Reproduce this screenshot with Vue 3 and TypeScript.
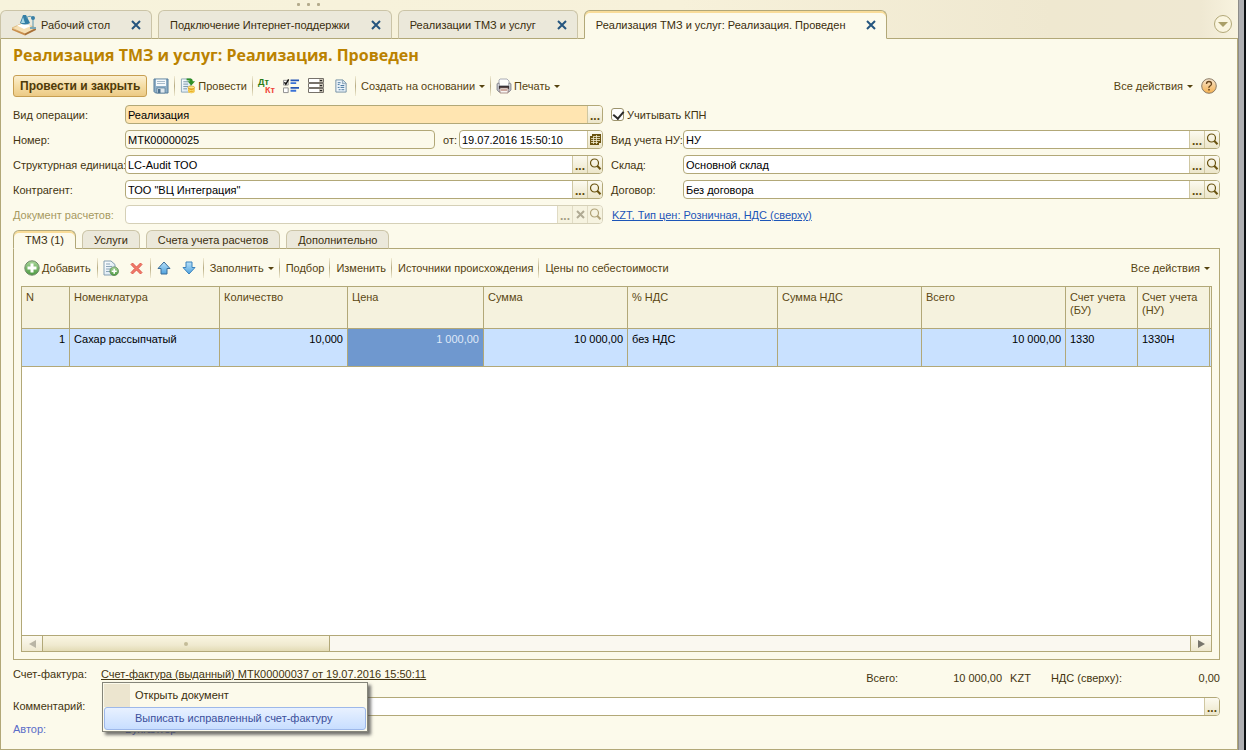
<script setup lang="ts">
import { ref } from 'vue'

interface WindowTab { title: string; icon?: boolean; active?: boolean }
interface Column { title: string; width?: number; numeric?: boolean; value: string; current?: boolean }

const windowTabs: WindowTab[] = [
  { title: 'Рабочий стол', icon: true },
  { title: 'Подключение Интернет-поддержки' },
  { title: 'Реализации ТМЗ и услуг' },
  { title: 'Реализация ТМЗ и услуг: Реализация. Проведен', active: true },
]

const sectionTabs = ['ТМЗ (1)', 'Услуги', 'Счета учета расчетов', 'Дополнительно']
const activeSection = ref(0)

const columns: Column[] = [
  { title: 'N', width: 48, numeric: true, value: '1' },
  { title: 'Номенклатура', width: 150, value: 'Сахар рассыпчатый' },
  { title: 'Количество', width: 128, numeric: true, value: '10,000' },
  { title: 'Цена', width: 136, numeric: true, value: '1 000,00', current: true },
  { title: 'Сумма', width: 144, numeric: true, value: '10 000,00' },
  { title: '% НДС', width: 150, value: 'без НДС' },
  { title: 'Сумма НДС', width: 144, numeric: true, value: '' },
  { title: 'Всего', width: 144, numeric: true, value: '10 000,00' },
  { title: 'Счет учета (БУ)', width: 72, value: '1330' },
  { title: 'Счет учета (НУ)', width: 72, value: '1330Н' },
  { title: '', value: '' },
]

const operation = ref('Реализация')
const docNumber = ref('МТК00000025')
const docDate = ref('19.07.2016 15:50:10')
const unit = ref('LC-Audit ТОО')
const partner = ref('ТОО "ВЦ Интеграция"')
const settlement = ref('')
const taxKind = ref('НУ')
const warehouse = ref('Основной склад')
const contract = ref('Без договора')
const comment = ref('')
const useKpn = ref(true)
</script>

<template>
  <div class="shell">
    <svg class="defs" aria-hidden="true">
      <defs>
        <linearGradient id="gGreen" x1="0" y1="0" x2="0" y2="1"><stop offset="0" stop-color="#a9d69a" /><stop offset="1" stop-color="#4c9a40" /></linearGradient>
        <linearGradient id="gBlue" x1="0" y1="0" x2="0" y2="1"><stop offset="0" stop-color="#b9e2fa" /><stop offset="1" stop-color="#4fa2de" /></linearGradient>
        <linearGradient id="gHelp" x1="0" y1="0" x2="0" y2="1"><stop offset="0" stop-color="#f7e6d0" /><stop offset="1" stop-color="#f5b04e" /></linearGradient>
        <linearGradient id="gPaper" x1="0" y1="0" x2="1" y2="1"><stop offset="0" stop-color="#ffffff" /><stop offset="1" stop-color="#cfe2ef" /></linearGradient>
      </defs>
      <symbol id="close" viewBox="0 0 10 10"><path d="M1 1 9 9M9 1 1 9" stroke="#25557f" stroke-width="2" fill="none" /></symbol>
      <symbol id="search" viewBox="0 0 13 13"><circle cx="5.5" cy="5" r="4" fill="none" stroke="#6a5310" stroke-width="1.2" /><path d="M8.200 7.800 11.500 11.300" stroke="#6a5310" stroke-width="2" /></symbol>
      <symbol id="clear" viewBox="0 0 9 9"><path d="M1 1 8 8M8 1 1 8" stroke="#6a6348" stroke-width="2" fill="none" /></symbol>
      <symbol id="calendar" viewBox="0 0 12 12"><path d="M3 0h9v9h-2v2H1V2h2z" fill="#6a5310" /><path d="M4 2.500h7M2 4.500h9M2 6.500h9M2 8.500h7M4.500 3v7M7.500 1v9" stroke="#f3ecd0" stroke-width=".8" /></symbol>
      <symbol id="desk" viewBox="0 0 26 22">
        <path d="M1 14 12 9l13 5-11 6z" fill="#f6dfb2" stroke="#dfbd85" /><path d="M1 14.500v1.500l13 5.500v-2z" fill="#c98e4c" /><path d="M14 19.500v2L25 16v-2z" fill="#a87038" />
        <path d="M6 11.500 14 9l6 3-7 3z" fill="#fff" /><path d="M12 1h3l4 8q-5 3-10 0z" fill="#357fa6" /><path d="M12 3 10 9h4z" fill="#a9d7e5" /><path d="M15 4q5-4 7 1v8" fill="none" stroke="#5796b0" /><circle cx="22" cy="4" r="2" fill="#397fa6" /><path d="M19 13h6v2h-6z" fill="#7ba7b6" />
      </symbol>
      <symbol id="save" viewBox="0 0 16 16"><path d="M1 1h14v14H2.500L1 13.500z" fill="#8fafc7" stroke="#567c9a" /><path d="M3 1.500h10V8H3z" fill="#f6fafc" /><path d="M4 3.500h8M4 5.500h8" stroke="#a9bccb" /><path d="M4 10h8v5H4z" fill="#dfe8ee" stroke="#567c9a" stroke-width=".7" /><path d="M5 11h2.500v4H5z" fill="#4c718f" /></symbol>
      <symbol id="post" viewBox="0 0 16 17">
        <path d="M1 1h10v14H1z" fill="url(#gPaper)" stroke="#8ca6b7" /><path d="M3 4h5M3 6.500h5M3 9h5M3 11.500h4" stroke="#7893a7" />
        <path d="M6.500.5h4q2.500 0 2.500 3h2.500L11.500 8 7.500 3.500H10q0-1-3.500-1z" fill="#2f8f27" />
        <path d="M8 10v5q3.500 2.500 7 0v-5z" fill="#e7a91f" /><ellipse cx="11.5" cy="10" rx="3.500" ry="1.500" fill="#ffe682" stroke="#ca8c18" stroke-width=".6" /><path d="M8 12.500q3.500 2 7 0M8 14.500q3.500 2 7 0" fill="none" stroke="#fbe07a" />
      </symbol>
      <symbol id="checks" viewBox="0 0 17 16"><path d="M.5 2h5v5h-5zM.5 10h5v5h-5z" fill="#fff" stroke="#8b8b8b" /><path d="M1.500 4 3 6l3-5" fill="none" stroke="#111" stroke-width="1.500" /><path d="M8 2h9M8 10h9" stroke="#2455b5" stroke-width="2" /><path d="M8 5h6M8 13h6" stroke="#3a72d7" stroke-width="2" /></symbol>
      <symbol id="combos" viewBox="0 0 16 16"><path d="M.5.5h15v4H.5zM.5 5.500h15v4H.5zM.5 10.500h15v4H.5z" fill="#fff" stroke="#77726b" /><path d="M11 1h4v3h-4zM11 6h4v3h-4zM11 11h4v3h-4z" fill="#c9c3b6" /><path d="M11.500 2h3L13 3.500zM11.500 7h3L13 8.500zM11.500 12h3L13 13.500z" fill="#111" /></symbol>
      <symbol id="report" viewBox="0 0 13 15"><path d="M1 1h7.500L12 4.500V14H1z" fill="#eef5fa" stroke="#718ea3" /><path d="M8 1v4h4" fill="#c8dbe8" stroke="#718ea3" stroke-width=".7" /><path d="M3 4h3M3 6h2M6 7h4M3 9h2M6 9h4M4 11.500h2M7 11.500h3" stroke="#40719b" /></symbol>
      <symbol id="print" viewBox="0 0 16 16"><path d="M4 1h7l2 2v5H3V2z" fill="#fdfdfd" stroke="#979aa4" stroke-width=".8" /><path d="M1 6q0-1 2-1v3h10V5q2 0 2 1v6l-2 2H3l-2-2z" fill="#b8bac1" stroke="#84848b" stroke-width=".8" /><path d="M3 8h10v3H3z" fill="#393237" /><path d="M4 10h8v5H4z" fill="#f8f5f3" stroke="#8c6c65" stroke-width=".7" /><path d="M5 12h6" stroke="#a35c4a" /><path d="M2 7h1M13 7h1" stroke="#fff" /></symbol>
      <symbol id="help" viewBox="0 0 16 16"><circle cx="8" cy="8" r="7.300" fill="url(#gHelp)" stroke="#8b7b66" /><path d="M5.500 6q0-2.500 2.500-2.500T10.500 6Q10.500 7 9 8T8 10" fill="none" stroke="#69451c" stroke-width="1.300" /><path d="M7.200 11h1.600v1.600H7.200z" fill="#69451c" /></symbol>
      <symbol id="add" viewBox="0 0 16 16"><circle cx="8" cy="8" r="7.200" fill="url(#gGreen)" stroke="#6f8a6a" /><path d="M8 3.500v9M3.500 8h9" stroke="#fff" stroke-width="3" /></symbol>
      <symbol id="copy" viewBox="0 0 16 16"><path d="M1 1h7l4 3.500V15H1z" fill="url(#gPaper)" stroke="#849fb1" /><path d="M3 4h4M3 6.500h6M3 9h5M3 11.500h4" stroke="#8ba5b8" /><circle cx="11.200" cy="11.200" r="4.300" fill="url(#gGreen)" stroke="#5c8655" stroke-width=".8" /><path d="M11.200 8.700v5M8.700 11.200h5" stroke="#fff" stroke-width="1.600" /></symbol>
      <symbol id="remove" viewBox="0 0 13 13"><path d="M1 2.500 2.500 1l4 4 4-4L12 2.500l-3.800 4L12 10.500 10.500 12l-4-4-4 4L1 10.500l3.800-4z" fill="#f0796a" stroke="#dc5245" stroke-width=".9" /></symbol>
      <symbol id="up" viewBox="0 0 14 14"><path d="M7 1 13 7.500h-3V13H4V7.500H1z" fill="url(#gBlue)" stroke="#3a6c98" stroke-linejoin="round" /></symbol>
      <symbol id="down" viewBox="0 0 14 14"><path d="M7 13 13 6.500h-3V1H4v5.500H1z" fill="url(#gBlue)" stroke="#3a82bd" stroke-linejoin="round" /></symbol>
    </svg>

    <div class="window">
      <header class="strip">
        <div class="grip"><i /><i /><i /></div>
        <nav class="wtabs">
          <div v-for="t in windowTabs" :key="t.title" class="wtab" :class="{ active: t.active, home: t.icon }">
            <svg v-if="t.icon" class="desk"><use href="#desk" /></svg>
            <a href="#" class="wtitle">{{ t.title }}</a>
            <button class="plain wclose" aria-label="Закрыть"><svg><use href="#close" /></svg></button>
          </div>
          <span class="rest" />
          <button class="plain list" aria-label="Список окон"><i class="big-arrow" /></button>
        </nav>
      </header>

      <main class="form">
        <h1>Реализация ТМЗ и услуг: Реализация. Проведен</h1>

        <div class="toolbar main-bar">
          <button class="primary">Провести и закрыть</button>
          <span class="icons"><button class="tool-icon" aria-label="Записать"><svg class="i16"><use href="#save" /></svg></button></span>
          <i class="sep" />
          <button class="tool"><svg class="i16"><use href="#post" /></svg>Провести</button>
          <i class="sep" />
          <span class="icons">
            <button class="tool-icon dtkt" aria-label="Дт Кт"><span class="dt">Дт</span><span class="kt">Кт</span></button>
            <button class="tool-icon" aria-label="Флажки"><svg class="i16"><use href="#checks" /></svg></button>
            <button class="tool-icon" aria-label="Списки"><svg class="i16"><use href="#combos" /></svg></button>
            <button class="tool-icon" aria-label="Отчет"><svg class="i14"><use href="#report" /></svg></button>
          </span>
          <i class="sep" />
          <button class="tool">Создать на основании<i class="arrow" /></button>
          <i class="sep" />
          <button class="tool"><svg class="i16"><use href="#print" /></svg>Печать<i class="arrow" /></button>
          <button class="tool push">Все действия<i class="arrow" /></button>
          <button class="plain help" aria-label="Справка"><svg class="i16"><use href="#help" /></svg></button>
        </div>

        <div class="fields">
          <label for="operation">Вид операции:</label>
          <div class="field warm"><input id="operation" v-model="operation"><button class="more" aria-label="Выбрать">...</button></div>
          <div class="check"><input id="kpn" v-model="useKpn" type="checkbox"><label for="kpn">Учитывать КПН</label></div>

          <label for="number">Номер:</label>
          <div class="pair">
            <div class="field locked"><input id="number" v-model="docNumber"></div>
            <label for="date">от:</label>
            <div class="field date"><input id="date" v-model="docDate"><button aria-label="Календарь"><svg class="cal"><use href="#calendar" /></svg></button></div>
          </div>
          <label class="second" for="tax">Вид учета НУ:</label>
          <div class="field"><input id="tax" v-model="taxKind"><button class="more" aria-label="Выбрать">...</button><button aria-label="Открыть"><svg class="lens"><use href="#search" /></svg></button></div>

          <label for="unit">Структурная единица:</label>
          <div class="field"><input id="unit" v-model="unit"><button class="more" aria-label="Выбрать">...</button><button aria-label="Открыть"><svg class="lens"><use href="#search" /></svg></button></div>
          <label class="second" for="warehouse">Склад:</label>
          <div class="field"><input id="warehouse" v-model="warehouse"><button class="more" aria-label="Выбрать">...</button><button aria-label="Открыть"><svg class="lens"><use href="#search" /></svg></button></div>

          <label for="partner">Контрагент:</label>
          <div class="field"><input id="partner" v-model="partner"><button class="more" aria-label="Выбрать">...</button><button aria-label="Открыть"><svg class="lens"><use href="#search" /></svg></button></div>
          <label class="second" for="contract">Договор:</label>
          <div class="field"><input id="contract" v-model="contract"><button class="more" aria-label="Выбрать">...</button><button aria-label="Открыть"><svg class="lens"><use href="#search" /></svg></button></div>

          <label class="dim" for="settlement">Документ расчетов:</label>
          <div class="field off"><input id="settlement" v-model="settlement" disabled><button class="more" disabled aria-label="Выбрать">...</button><button disabled aria-label="Очистить"><svg class="clr"><use href="#clear" /></svg></button><button disabled aria-label="Открыть"><svg class="lens"><use href="#search" /></svg></button></div>
          <div class="terms"><a href="#">KZT, Тип цен: Розничная, НДС (сверху)</a></div>
        </div>

        <nav class="stabs">
          <button v-for="(s, i) in sectionTabs" :key="s" class="stab" :class="{ active: i === activeSection }" @click="activeSection = i">{{ s }}</button>
        </nav>

        <section class="panel">
          <div class="toolbar">
            <button class="tool first"><svg class="i16"><use href="#add" /></svg>Добавить</button>
            <i class="sep" />
            <span class="icons">
              <button class="tool-icon" aria-label="Скопировать"><svg class="i16"><use href="#copy" /></svg></button>
              <button class="tool-icon" aria-label="Удалить"><svg class="i13"><use href="#remove" /></svg></button>
            </span>
            <i class="sep" />
            <span class="icons">
              <button class="tool-icon" aria-label="Вверх"><svg class="i14"><use href="#up" /></svg></button>
              <button class="tool-icon" aria-label="Вниз"><svg class="i14"><use href="#down" /></svg></button>
            </span>
            <i class="sep" />
            <button class="tool">Заполнить<i class="arrow" /></button>
            <i class="sep" />
            <button class="tool">Подбор</button>
            <i class="sep" />
            <button class="tool">Изменить</button>
            <i class="sep" />
            <button class="tool">Источники происхождения</button>
            <i class="sep" />
            <button class="tool">Цены по себестоимости</button>
            <button class="tool push last">Все действия<i class="arrow" /></button>
          </div>

          <div class="grid">
            <div class="rows">
              <table>
                <colgroup><col v-for="(c, i) in columns" :key="i" :style="c.width ? { width: c.width + 'px' } : {}"></colgroup>
                <thead><tr><th v-for="(c, i) in columns" :key="i">{{ c.title }}</th></tr></thead>
                <tbody><tr><td v-for="(c, i) in columns" :key="i" :class="{ num: c.numeric, current: c.current }">{{ c.value }}</td></tr></tbody>
              </table>
            </div>
            <div class="scroll">
              <button class="left" aria-label="Влево"><i /></button>
              <div class="track"><div class="thumb"><i /></div></div>
              <button class="right" aria-label="Вправо"><i /></button>
            </div>
          </div>
        </section>

        <footer class="bottom">
          <div class="invoice">
            <span class="cap">Счет-фактура:</span>
            <div class="anchor">
              <a href="#">Счет-фактура (выданный) МТК00000037 от 19.07.2016 15:50:11</a>
              <div class="menu" role="menu">
                <button role="menuitem">Открыть документ</button>
                <button role="menuitem" class="hot">Выписать исправленный счет-фактуру</button>
              </div>
            </div>
            <div class="totals">
              <span>Всего:</span><span class="sum">10 000,00</span><span class="cur">KZT</span><span>НДС (сверху):</span><span class="vat">0,00</span>
            </div>
          </div>
          <div class="comment">
            <label for="comment">Комментарий:</label>
            <div class="field"><input id="comment" v-model="comment"><button class="more" aria-label="Выбрать">...</button></div>
          </div>
          <div class="author"><span>Автор:</span><span>Бухгалтер</span></div>
        </footer>
      </main>
    </div>
    <div class="edge" />
  </div>
</template>

<style>
body { margin: 0; }
</style>

<style scoped>
.shell, .shell * { box-sizing: border-box; }
.shell {
  display: flex;
  min-height: 100vh;
  font: 11px/13px "Liberation Sans", Arial, sans-serif;
  color: #43340f;
  background: #f7f2da;
}
.defs { position: absolute; width: 0; height: 0; }
button, input { font: inherit; color: inherit; margin: 0; padding: 0; border: 0; background: none; border-radius: 0; outline: 0; }
button { white-space: nowrap; cursor: pointer; }
.edge { flex: none; width: 8px; border-left: 1px solid #8d8c89; border-right: 2px solid #0c1013; background: #aeafb2; }
.window { flex: 1; min-width: 0; display: flex; flex-direction: column; }

.strip { background: linear-gradient(90deg, #f7f3dc, #f7f1da 55%, #efe8d0 85%, #efe8d2 97%, #f8f3df); }
.grip { display: flex; gap: 7px; height: 10px; padding: 3px 0 0 297px; }
.grip i { width: 3px; height: 3px; border-radius: 1px; background: #b4ab8c; }
.wtabs { display: flex; height: 29px; padding-right: 6px; background: linear-gradient(#b2a878, #b2a878) bottom / 100% 1px no-repeat; }
.wtab {
  display: flex; align-items: center; padding: 0 10px 0 11px; margin-right: 6px;
  border: 1px solid #cbc4a7; border-bottom-color: #b2a878; border-radius: 6px 6px 0 0;
  background: #ebe8da;
}
.wtab.home { padding-left: 10px; }
.wtab.active { border-color: #b2a878; border-bottom-color: #fcfaeb; background: #fcfaeb; box-shadow: inset 0 2px #f9dc98; margin-right: 0; }
.desk { width: 26px; height: 22px; margin-right: 4px; }
.wtitle { color: #3a2d0c; text-decoration: none; white-space: nowrap; padding-top: 1px; }
.plain { display: flex; align-items: center; justify-content: center; }
.wclose { margin-left: 21px; }
.wclose svg { width: 10px; height: 10px; }
.rest { flex: 1; }
.list { width: 18px; height: 18px; margin: 5px 0; border: 1px solid #b2a878; border-radius: 50%; background: #faf5df; }
.big-arrow { border: 5px solid transparent; border-top-color: #aa9f68; border-bottom: 0; }

.form {
  flex: 1; display: flex; flex-direction: column;
  padding: 0 17px 0 12px; background: #fcfaeb;
  border: 1px solid #b2a878; border-top: 0;
}
h1 { margin: 6px 0 9px; font: bold 16px/21px "Open Sans", "Noto Sans", sans-serif; color: #bb8200; }

.toolbar { display: flex; align-items: center; height: 22px; color: #55420f; }
.primary { height: 22px; padding: 0 6px; border: 1px solid #c79f52; border-radius: 3px; background: linear-gradient(#fbf0d2, #f5dda5 50%, #ecca85); font: bold 12px/14px "Liberation Sans", Arial, sans-serif; color: #4e3a08; }
.icons { display: flex; padding: 0 1px; }
.tool-icon { width: 25px; height: 22px; display: flex; align-items: center; justify-content: center; }
.sep { flex: none; width: 1px; height: 20px; background: linear-gradient(#f1ecd5, #b7ab82 50%, #f1ecd5); }
.tool { display: flex; align-items: center; padding: 0 5px 0 6px; height: 22px; }
.main-bar .tool { padding-left: 5px; }
.tool svg { margin-right: 2px; }
.i16 { width: 16px; height: 16px; }
.i14 { width: 14px; height: 14px; }
.i13 { width: 13px; height: 13px; }
.arrow { margin-left: 4px; border: 3px solid transparent; border-top-color: #55420f; border-bottom: 0; }
.toolbar .push { margin-left: auto; }
.tool.last { padding-right: 2px; }
.tool.first { padding-left: 3px; padding-right: 6px; }
.help { margin: 0 3px; }
.dtkt { flex-direction: column; align-items: stretch; padding: 0 4px; font: bold 9px/8px "Liberation Sans", Arial, sans-serif; }
.dt { text-align: left; color: #2a7a17; }
.kt { text-align: right; color: #f04438; }

.fields { display: grid; grid-template-columns: 112px minmax(0, 478fr) 80px minmax(0, 537fr); row-gap: 6px; margin-top: 8px; align-items: center; }
.fields label { white-space: nowrap; padding-top: 2px; }
.fields .second { padding-left: 8px; }
.field {
  display: flex; flex: 1; min-width: 0; height: 19px; overflow: hidden;
  border: 1px solid #b2a878; border-radius: 4px; background: #fff; color: #000;
}
.field input { flex: 1; min-width: 0; padding: 1px 2px 0; }
.field button {
  width: 15px; border-left: 1px solid #cfc7a2; background: linear-gradient(#fcfaf0, #ece6ca);
  display: flex; align-items: center; justify-content: center;
  font: bold 12px/15px "Liberation Sans", Arial, sans-serif; color: #5e490c;
}
.field .more { padding-top: 3px; }
.warm { background: #ffe5b1; }
.locked { background: #fcfaeb; }
.off { border-color: #d5d0b7; }
.off button { background: #f6f3e0; border-color: #e0dbc4; color: #a39c82; }
.off svg { opacity: .5; }
.lens { width: 13px; height: 13px; }
.cal { width: 12px; height: 12px; }
.clr { width: 9px; height: 9px; }
.pair { display: flex; align-items: center; }
.pair label { padding-left: 8px; padding-right: 2px; }
.field.date { flex: 0 0 144px; }
.check { grid-column: span 2; display: flex; align-items: center; padding-left: 8px; }
.check input { appearance: none; width: 13px; height: 13px; margin-right: 3px; border: 1px solid #9c936c; border-radius: 3px; background: #fff; position: relative; }
.check input:checked::after { content: ""; position: absolute; left: 3px; top: 0; width: 5px; height: 8px; border: solid #2b2b2b; border-width: 0 2px 2px 0; transform: rotate(40deg); }
.fields .dim { color: #a6995f; }
.terms { grid-column: span 2; padding: 2px 0 0 9px; }
.terms a { color: #1c55b8; }

.stabs { display: flex; margin-top: 6px; height: 19px; background: linear-gradient(#b2a878, #b2a878) bottom / 100% 1px no-repeat; }
.stab { padding: 2px 11px 0; margin-right: 6px; border: 1px solid #cbc4a7; border-bottom-color: #b2a878; border-radius: 6px 6px 0 0; background: #ebe8da; color: #3a2d0c; }
.stab.active { border-color: #b2a878; border-bottom-color: #fcfaeb; background: #fcfaeb; box-shadow: inset 0 2px #f9dc98; }
.panel { flex: 1; display: flex; flex-direction: column; padding: 8px 7px 7px; border: 1px solid #b2a878; border-top: 0; }
.panel .toolbar { margin-bottom: 7px; }

.grid { flex: 1; display: flex; flex-direction: column; border: 1px solid #b2a878; background: #fff; }
.rows { flex: 1; overflow: hidden; }
table { width: 100%; table-layout: fixed; border-collapse: separate; border-spacing: 0; }
th, td { padding: 4px; vertical-align: top; border: solid #b2a878; border-width: 0 1px 1px 0; overflow: hidden; }
th:last-child, td:last-child { border-right: 0; padding: 0; }
th { height: 42px; text-align: left; font-weight: normal; background: #f5f2de; color: #5c4813; }
td { height: 38px; background: #c9e1ff; color: #000; }
.num { text-align: right; }
td.current { background: #6f98cf; color: #dfe9f8; }
.scroll { display: flex; height: 16px; border-top: 1px solid #b2a878; background: #faf8f0; }
.scroll button { width: 21px; display: flex; align-items: center; justify-content: center; background: linear-gradient(#fcfaf0, #eee8cf); }
.scroll .left { border-right: 1px solid #b2a878; }
.scroll .right { border-left: 1px solid #b2a878; }
.left i { border: 4px solid transparent; border-left: 0; border-right: 7px solid #b9b5a5; }
.right i { border: 4px solid transparent; border-right: 0; border-left: 7px solid #77756c; }
.track { flex: 1; display: flex; }
.thumb { width: 25%; display: flex; align-items: center; justify-content: center; border-right: 1px solid #b2a878; background: linear-gradient(#faf6e2, #f0ead0 60%, #e3dbb5); }
.thumb i { width: 4px; height: 4px; border-radius: 2px; background: #c4bc98; }

.bottom { padding-bottom: 13px; }
.invoice { display: flex; height: 37px; padding-top: 7px; }
.cap { width: 88px; margin-top: 1px; }
.anchor { position: relative; margin-top: 1px; }
.anchor a { color: #43340f; white-space: nowrap; }
.menu {
  position: absolute; z-index: 2; left: 1px; top: 14px; padding: 1px; width: 266px;
  border: 1px solid #85857a; background: #fcfaeb; box-shadow: 3px 3px 3px rgba(60, 60, 60, .7);
}
.menu button { display: block; width: 100%; height: 23px; padding-left: 31px; text-align: left; color: #3a2d0c; background: linear-gradient(90deg, #ece5cf 26px, transparent 26px); }
.menu .hot { padding-left: 30px; border: 1px solid #9db8ea; border-radius: 3px; background: linear-gradient(#e8f1ff, #c8deff); color: #3c509c; }
.totals { display: flex; margin: 5px 0 0 auto; color: #43340f; }
.totals .sum { width: 104px; text-align: right; }
.totals .cur { margin: 0 20px 0 8px; }
.totals .vat { width: 98px; text-align: right; }
.comment { display: flex; align-items: center; }
.comment label { width: 112px; }
.author { display: flex; margin-top: 7px; color: #5a6dc8; }
.author span:first-child { width: 112px; }
</style>
